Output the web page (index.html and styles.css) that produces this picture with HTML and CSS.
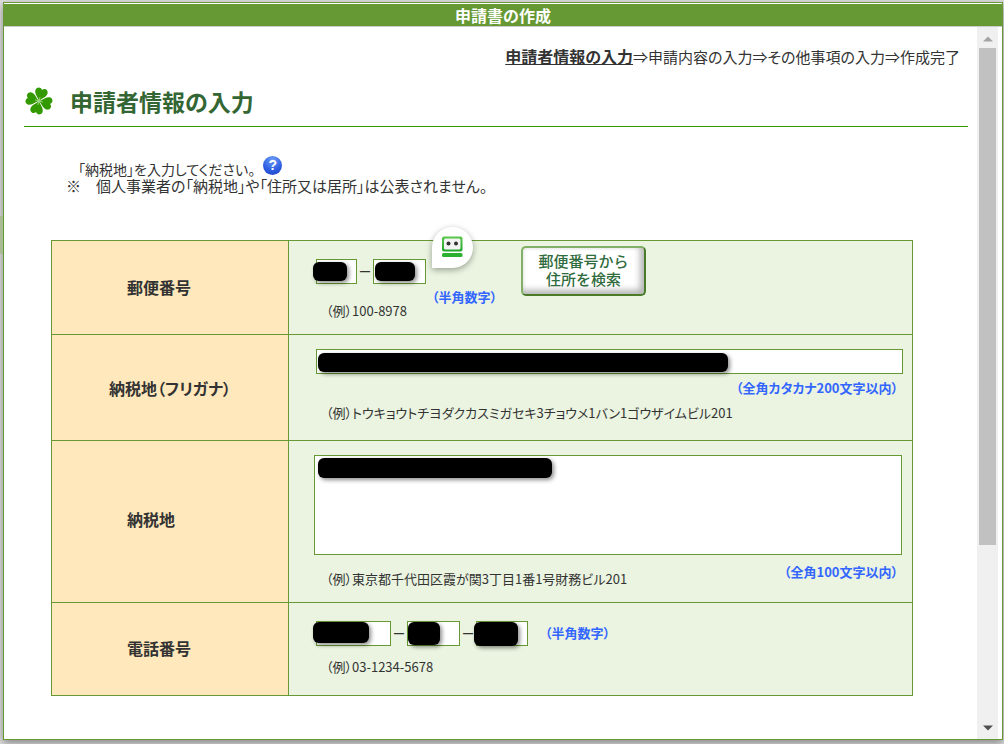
FILE: index.html
```html
<!DOCTYPE html>
<html lang="ja">
<head>
<meta charset="utf-8">
<title>申請書の作成</title>
<link rel="stylesheet" href="styles.css">
</head>
<body>
<div class="backdrop-tab"></div>
<div class="dialog" role="dialog" aria-labelledby="dialog-title">
  <header class="titlebar"><h1 id="dialog-title" class="titlebar-text">申請書の作成</h1></header>
  <div class="dialog-body">
    <main class="content">
      <p class="steps"><strong class="step-current">申請者情報の入力</strong>⇒申請内容の入力⇒その他事項の入力⇒作成完了</p>
      <div class="section-head">
        <svg class="clover" viewBox="-15 -15 30 30" aria-hidden="true">
          <defs><path id="leaf" d="M0 0C-1.500 -3 -6.300 -5.500 -6.300 -9.500C-6.300 -13 -2 -14.500 0 -11.500C2 -14.500 6.300 -13 6.300 -9.500C6.300 -5.500 1.500 -3 0 0Z"/></defs>
          <g fill="#390">
            <use href="#leaf" transform="rotate(15)"/>
            <use href="#leaf" transform="rotate(105)"/>
            <use href="#leaf" transform="rotate(195)"/>
            <use href="#leaf" transform="rotate(285)"/>
          </g>
          <path d="M0 0V-4M0 0H4M0 0V4M0 0H-4" transform="rotate(15)" stroke="#a5dc8a" stroke-width="0.800" fill="none"/>
        </svg>
        <h2 class="section-title">申請者情報の入力</h2>
      </div>
      <div class="intro">
        <p class="intro-line intro-first">「納税地」を入力してください。<button type="button" class="help" aria-label="ヘルプ">?</button></p>
        <p class="intro-line intro-note">※　個人事業者の「納税地」や「住所又は居所」は公表されません。</p>
      </div>
      <table class="form-table">
        <tr>
          <th scope="row" class="th-short">郵便番号</th>
          <td class="cell-zip">
            <div class="zip-row">
              <div class="zip-main">
                <div class="fields">
                  <span class="field zip-a"><input type="text" aria-label="郵便番号 上3桁"><i class="mask mask-zip-a"></i></span>
                  <span class="dash">–</span>
                  <span class="field zip-b"><input type="text" aria-label="郵便番号 下4桁"><i class="mask mask-zip-b"></i>
                    <svg class="robot" viewBox="0 0 42 42" aria-hidden="true">
                      <defs><linearGradient id="rg" x1="0" y1="0" x2="0" y2="1"><stop offset="0" stop-color="#5cc84c"/><stop offset="1" stop-color="#1fa52a"/></linearGradient></defs>
                      <path d="M0 41V21A20.500 20.500 0 1 1 21 41Z" fill="#fff"/>
                      <rect x="10" y="9.500" width="20.500" height="15" rx="2" fill="url(#rg)"/>
                      <rect x="12" y="11.500" width="16.500" height="11" rx="1.500" fill="#f3f3f3"/>
                      <circle cx="16.500" cy="16.500" r="2" fill="#333"/><circle cx="24" cy="16.500" r="2" fill="#333"/>
                      <rect x="10" y="26" width="20.500" height="4" rx="1.500" fill="#2bb02f"/>
                    </svg>
                  </span>
                </div>
                <p class="example">（例）100-8978</p>
              </div>
              <span class="hint zip-hint">（半角数字）</span>
              <button type="button" class="search-btn">郵便番号から<br>住所を検索</button>
            </div>
          </td>
        </tr>
        <tr>
          <th scope="row"><label for="kana">納税地（フリガナ）</label></th>
          <td class="cell-kana">
            <span class="field"><input type="text" id="kana"><i class="mask mask-kana"></i></span>
            <p class="hint hint-right">（全角カタカナ200文字以内）</p>
            <p class="example">（例）トウキョウトチヨダクカスミガセキ3チョウメ1バン1ゴウザイムビル201</p>
          </td>
        </tr>
        <tr>
          <th scope="row" class="th-addr"><label for="addr">納税地</label></th>
          <td class="cell-addr">
            <span class="field area"><textarea id="addr"></textarea><i class="mask mask-addr"></i></span>
            <div class="addr-foot">
              <p class="example">（例）東京都千代田区霞が関3丁目1番1号財務ビル201</p>
              <p class="hint hint-right">（全角100文字以内）</p>
            </div>
          </td>
        </tr>
        <tr>
          <th scope="row" class="th-short">電話番号</th>
          <td class="cell-tel">
            <div class="fields">
              <span class="field tel-a"><input type="text" aria-label="市外局番"><i class="mask mask-tel-a"></i></span>
              <span class="dash">–</span>
              <span class="field tel-b"><input type="text" aria-label="市内局番"><i class="mask mask-tel-b"></i></span>
              <span class="dash">–</span>
              <span class="field tel-c"><input type="text" aria-label="加入者番号"><i class="mask mask-tel-c"></i></span>
              <span class="hint tel-hint">（半角数字）</span>
            </div>
            <p class="example">（例）03-1234-5678</p>
          </td>
        </tr>
      </table>
    </main>
    <div class="scrollbar" aria-hidden="true">
      <svg class="arrow" viewBox="0 0 10 6"><path d="M0 5.500L5 0.500L10 5.500Z" fill="#a3a3a3"/></svg>
      <div class="track"><div class="thumb"></div></div>
      <svg class="arrow" viewBox="0 0 10 6"><path d="M0 0.500L5 5.500L10 0.500Z" fill="#505050"/></svg>
    </div>
  </div>
</div>
</body>
</html>
```

FILE: styles.css
```css
* { box-sizing: border-box; }
html { height: 100%; }
body {
  margin: 0;
  min-height: 100vh;
  display: flex;
  padding: 2px 1px 4px 3px;
  background: #dedede;
  color: #333;
  font: 14px/16px "Noto Sans CJK JP", sans-serif;
  font-feature-settings: "palt";
}
h1, h2, p { margin: 0; }
.backdrop-tab {
  position: absolute;
  left: 0;
  top: 216px;
  width: 3px;
  height: 38px;
  background: #a9bb93;
}
.dialog {
  flex: 1;
  display: flex;
  flex-direction: column;
  padding-top: 1px;
  background: #fff;
  border: 1px solid #693;
  box-shadow: 0 3px 8px rgba(0, 0, 0, 0.4);
}
.titlebar {
  background: #693;
  border-bottom: 1px solid #ccc;
  padding: 3px 0;
  text-align: center;
}
.titlebar-text { font-size: 16px; line-height: 16px; color: #fff; font-weight: 700; }
.dialog-body { flex: 1; display: flex; padding-right: 4px; }
.content { flex: 1; padding: 19px 9px 20px 20px; }
.steps { text-align: right; font-size: 15px; line-height: 20px; padding-right: 8px; }
.step-current { font-size: 16px; text-decoration: underline; }
.section-head {
  display: flex;
  gap: 16px;
  align-items: center;
  height: 44px;
  margin-top: 16px;
  padding-bottom: 8px;
  border-bottom: 1px solid #390;
}
.clover { width: 30px; height: 30px; }
.section-title { font-size: 23px; line-height: 30px; font-weight: 700; color: #363; }
.intro { padding: 28px 0 0 42px; }
.intro-line { line-height: 16px; display: flex; }
.intro-first { padding-left: 12px; height: 22px; align-items: flex-end; }
.intro-note { font-size: 15px; padding-top: 1px; }
.help {
  width: 19px;
  height: 19px;
  margin: 0 0 2px 8px;
  padding: 0;
  border: 0;
  border-radius: 50%;
  background: radial-gradient(circle at 50% 20%, #6c9cf5, #2c5ce0 60%, #1c3fc0);
  color: #fff;
  font: 700 14px/19px "Liberation Sans", sans-serif;
  text-align: center;
}
.form-table {
  width: calc(100% - 82px);
  margin: 46px 55px 0 27px;
  border-collapse: collapse;
  table-layout: fixed;
}
th, td { border: 1px solid #693; padding: 0; }
th { width: 237px; background: #ffe8bb; font-size: 16px; line-height: 16px; font-weight: 700; }
.th-short { padding: 0 22px 2px 0; }
.th-addr { padding: 0 38px 6px 0; }
td { background: #eaf4e0; vertical-align: top; }
.cell-zip { height: 94px; padding: 5px 9px 0 27px; }
.cell-kana { height: 106px; padding: 14px 9px 0 27px; }
.cell-addr { height: 162px; padding: 14px 10px 0 25px; }
.cell-tel { height: 93px; padding: 18px 9px 0 27px; }
.zip-row { display: flex; align-items: flex-start; }
.zip-main { padding-top: 13px; width: 110px; }
.fields { display: flex; align-items: center; }
.field { position: relative; display: block; }
.field input, .field textarea {
  display: block;
  width: 100%;
  height: 25px;
  border: 1px solid #693;
  background: #fff;
  padding: 2px;
  resize: none;
}
.field textarea { height: 100px; }
.zip-a { width: 41px; }
.zip-b { width: 53px; }
.tel-a { width: 75px; }
.tel-b { width: 53px; }
.tel-c { width: 52px; }
.dash {
  width: 16px;
  padding-bottom: 4px;
  text-align: center;
  font: 18px/18px "Liberation Sans", sans-serif;
}
.example { font-size: 13px; line-height: 16px; padding-left: 10px; white-space: nowrap; }
.cell-zip .example { margin-top: 19px; }
.cell-kana .example { margin-top: 9px; }
.cell-tel .example { margin-top: 13px; }
.hint { color: #36f; font-size: 13px; line-height: 16px; font-weight: 700; white-space: nowrap; }
.hint-right { text-align: right; padding-right: 5px; }
.cell-kana .hint { margin-top: 6px; }
.zip-hint { width: 95px; padding-left: 6px; margin-top: 43px; }
.tel-hint { padding: 0 0 2px 17px; }
.addr-foot { display: flex; justify-content: space-between; padding: 9px 0 0 2px; }
.addr-foot .example { padding-top: 7px; }
.addr-foot .hint-right { padding-right: 4px; }
.search-btn {
  width: 125px;
  height: 50px;
  padding: 0 0 2px;
  border: 2px solid;
  border-color: #82b066 #4a7a2a #4a7a2a #82b066;
  border-radius: 5px;
  background: #fff;
  box-shadow: inset -4px -4px 6px #b5b5b5, inset 2px 2px 2px #f4f4f4;
  color: #2f6b3c;
  font: 500 15px/18px "Noto Sans CJK JP", sans-serif;
}
.mask {
  position: absolute;
  background: #000;
  border-radius: 6px;
  box-shadow: 2px 2px 4px rgba(0, 0, 0, 0.45);
}
.mask-zip-a { left: -3px; top: 3px; width: 34px; height: 19px; }
.mask-zip-b { left: 2px; top: 3px; width: 40px; height: 19px; }
.mask-kana { left: 2px; top: 4px; width: 410px; height: 19px; }
.mask-addr { left: 4px; top: 3px; width: 234px; height: 20px; }
.mask-tel-a { left: -3px; top: 1px; width: 56px; height: 21px; }
.mask-tel-b { left: 1px; top: 1px; width: 32px; height: 23px; }
.mask-tel-c { left: -2px; top: 1px; width: 44px; height: 24px; }
.robot {
  position: absolute;
  left: 59px;
  top: -32px;
  width: 42px;
  height: 42px;
  filter: drop-shadow(0 2px 3px rgba(0, 0, 0, 0.35));
}
.scrollbar {
  width: 21px;
  background: #f0f0f0;
  display: flex;
  flex-direction: column;
  align-items: center;
  padding: 9px 0 8px;
}
.arrow { width: 10px; height: 6px; }
.track { flex: 1; width: 17px; padding: 6px 0; }
.thumb { height: 74%; background: #c1c1c1; }
```
